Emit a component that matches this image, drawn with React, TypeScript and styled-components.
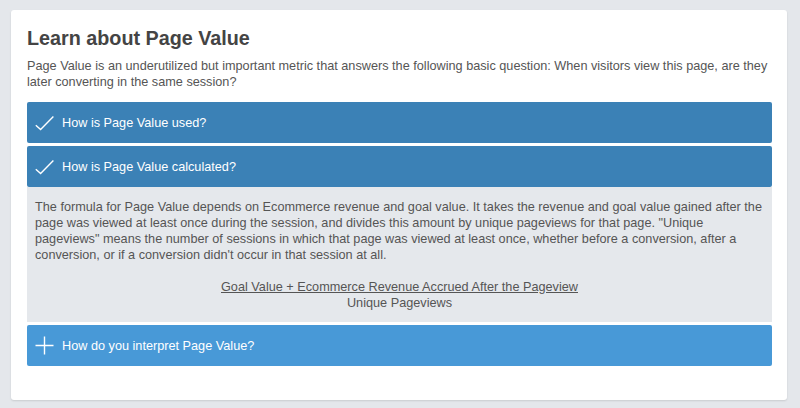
import React from 'react';
import styled, { createGlobalStyle } from 'styled-components';

const GlobalStyle = createGlobalStyle`
  html, body {
    margin: 0;
    padding: 0;
    background: #e4e7eb;
    font-family: "Liberation Sans", Arial, sans-serif;
  }
`;

const Page = styled.div`
  padding: 10px 13px 7px 11px;
`;

const Card = styled.section`
  background: #ffffff;
  border-radius: 3px;
  box-shadow: 0 1px 2px rgba(0, 0, 0, 0.12);
  padding: 16px 15px 34px 16px;
`;

const Title = styled.h2`
  margin: 0;
  font-size: 19.75px;
  line-height: 24px;
  font-weight: bold;
  color: #444444;
`;

const Intro = styled.p`
  margin: 8px 0 12px;
  font-size: 12.7px;
  line-height: 16px;
  color: #555555;
`;

const Accordion = styled.div`
  display: flex;
  flex-direction: column;
  gap: 3px;
`;

const Header = styled.div<{ $open: boolean }>`
  display: flex;
  align-items: center;
  gap: 8px;
  height: 41px;
  padding: 0 8px;
  border-radius: 2px;
  background: ${({ $open }) => ($open ? '#3b81b6' : '#4899d7')};
  color: #ffffff;
  font-size: 12.7px;
  cursor: pointer;
`;

const Icon = styled.svg`
  width: 19px;
  height: 19px;
  flex: none;
`;

const Body = styled.div`
  background: #e5e8ec;
  padding: 12px 8px 11px;
  font-size: 12.7px;
  line-height: 16px;
  color: #555555;
  margin-top: -3px;
`;

const BodyText = styled.p`
  margin: 0;
`;

const Formula = styled.div`
  margin-top: 16px;
  text-align: center;
`;

const Numerator = styled.div`
  text-decoration: underline;
`;

const Check = () => (
  <Icon viewBox="0 0 19 19">
    <path d="M0.8 12.2 L5.6 16.6 L18.4 3.6" fill="none" stroke="#fff" strokeWidth="1.4" />
  </Icon>
);

const Plus = () => (
  <Icon viewBox="0 0 19 19">
    <path d="M9.5 0.5 V18.5 M0.5 9.5 H18.5" fill="none" stroke="#fff" strokeWidth="1.4" />
  </Icon>
);

const items = [
  { title: 'How is Page Value used?', open: true, body: null },
  { title: 'How is Page Value calculated?', open: true, body: 'calc' },
  { title: 'How do you interpret Page Value?', open: false, body: null },
];

export default function App() {
  return (
    <>
      <GlobalStyle />
      <Page>
        <Card>
          <Title>Learn about Page Value</Title>
          <Intro>
            Page Value is an underutilized but important metric that answers the following basic
            question: When visitors view this page, are they later converting in the same session?
          </Intro>
          <Accordion>
            {items.map((item) => (
              <React.Fragment key={item.title}>
                <Header $open={item.open}>
                  {item.open ? <Check /> : <Plus />}
                  <span>{item.title}</span>
                </Header>
                {item.body && (
                  <Body>
                    <BodyText>
                      The formula for Page Value depends on Ecommerce revenue and goal value. It
                      takes the revenue and goal value gained after the page was viewed at least
                      once during the session, and divides this amount by unique pageviews for that
                      page. "Unique pageviews" means the number of sessions in which that page was
                      viewed at least once, whether before a conversion, after a conversion, or if a
                      conversion didn't occur in that session at all.
                    </BodyText>
                    <Formula>
                      <Numerator>Goal Value + Ecommerce Revenue Accrued After the Pageview</Numerator>
                      <div>Unique Pageviews</div>
                    </Formula>
                  </Body>
                )}
              </React.Fragment>
            ))}
          </Accordion>
        </Card>
      </Page>
    </>
  );
}
